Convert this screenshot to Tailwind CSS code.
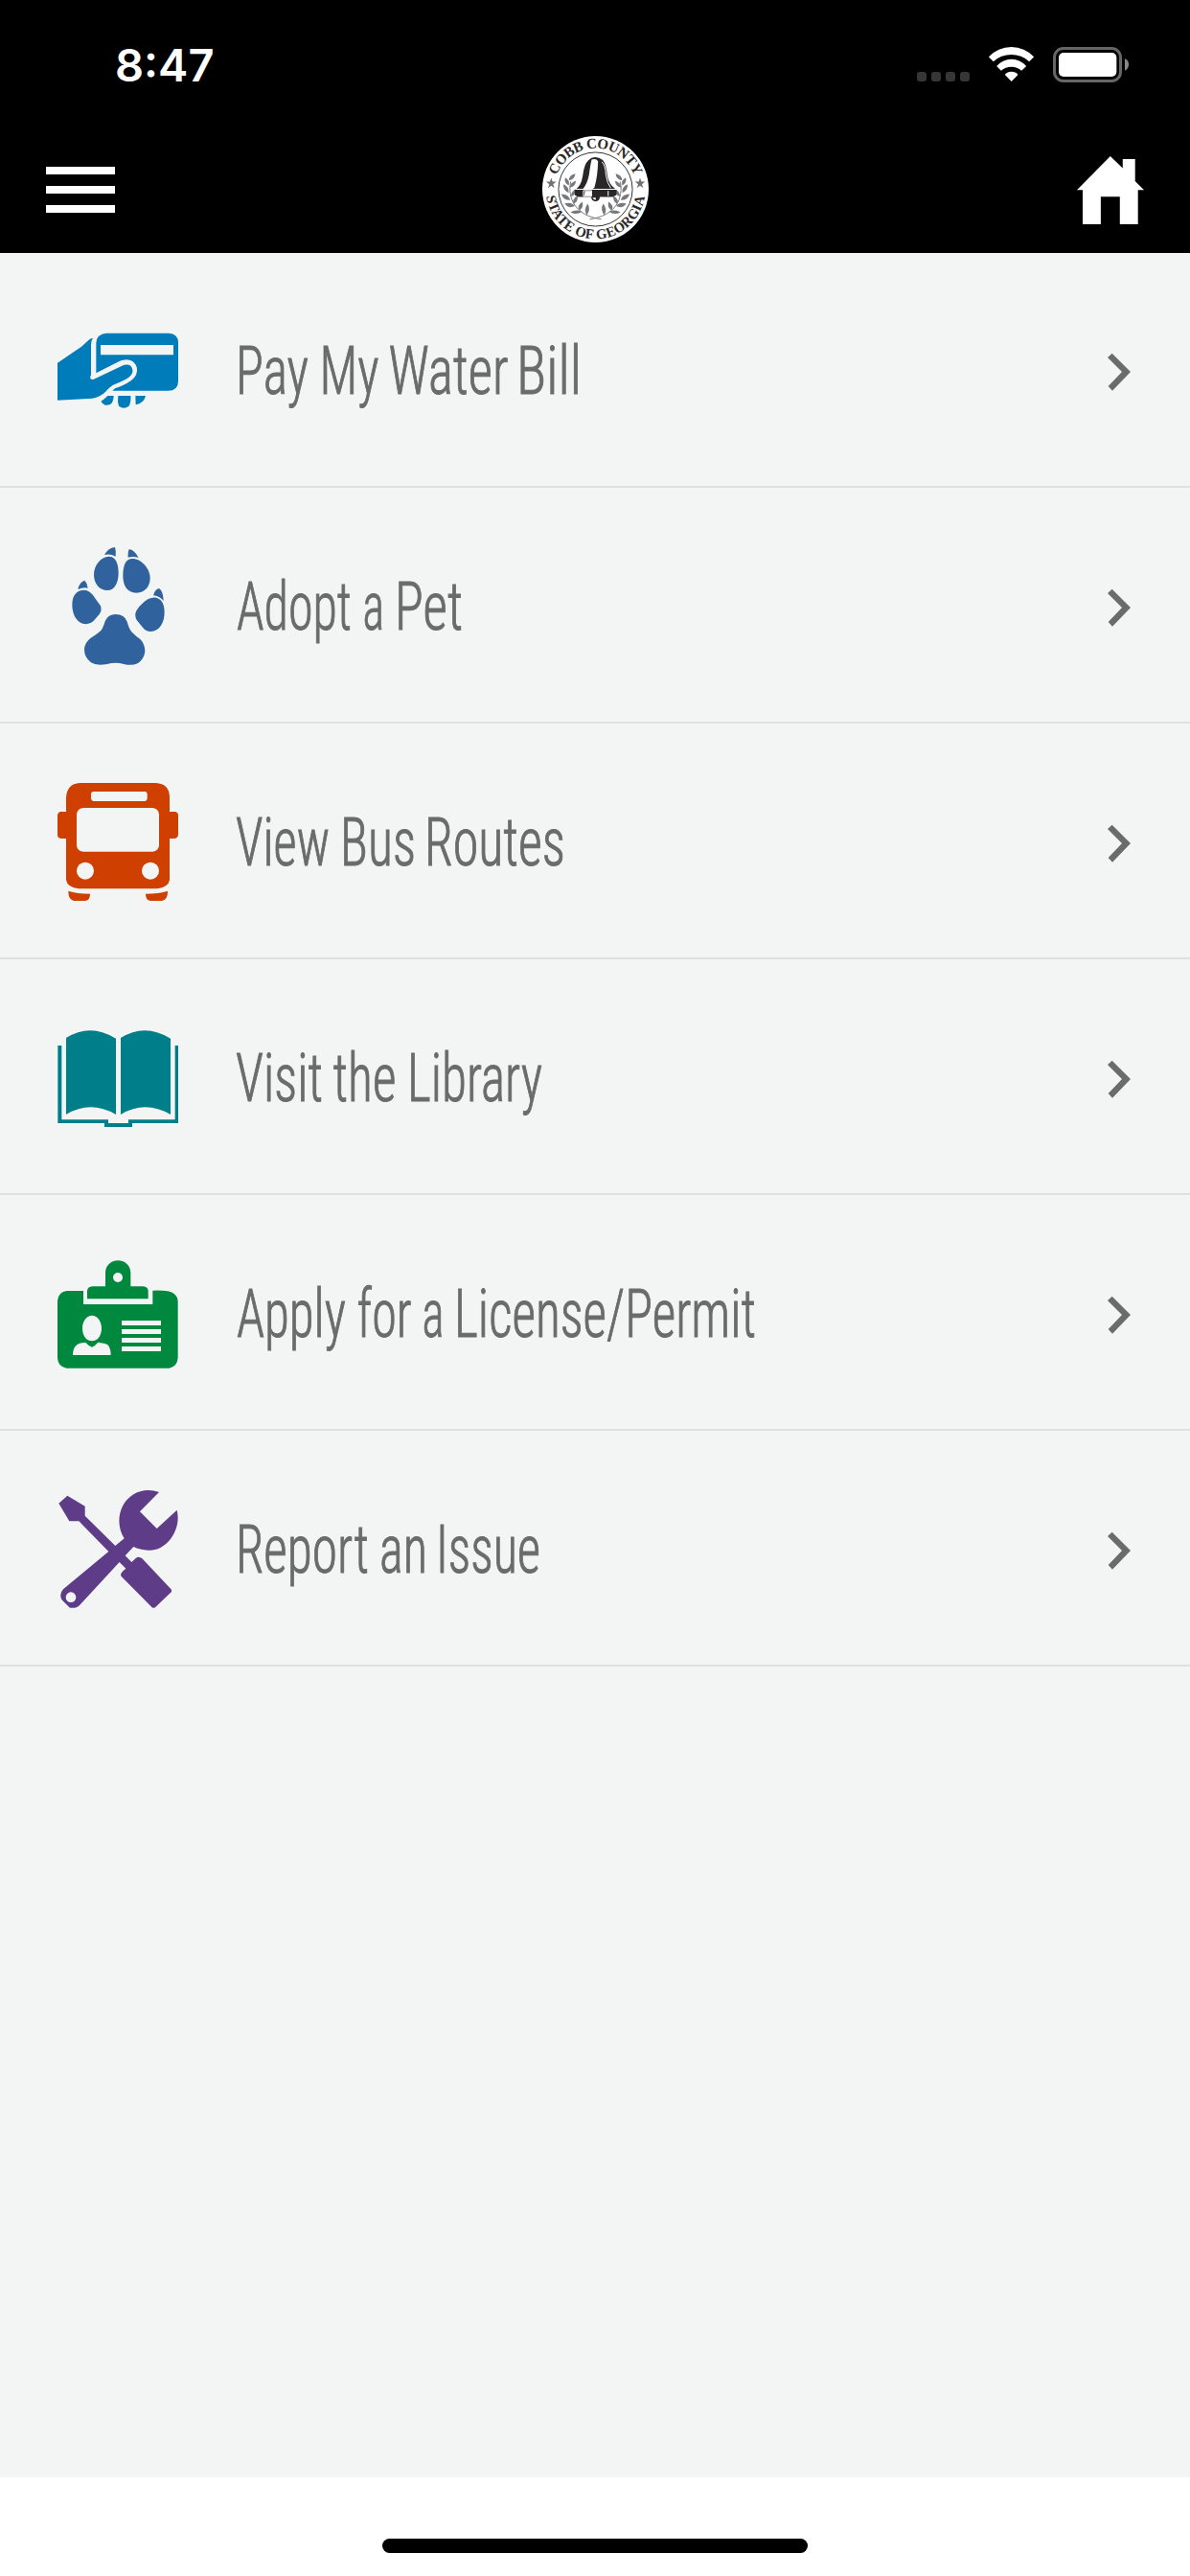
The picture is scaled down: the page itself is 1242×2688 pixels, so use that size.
<!DOCTYPE html>
<html lang="en">
<head>
  <meta charset="UTF-8" />
  <meta name="viewport" content="width=device-width, initial-scale=1.0" />
  <title>Cobb County</title>
  <script src="https://cdn.jsdelivr.net/npm/@tailwindcss/browser@4"></script>
</head>
<body class="flex h-[2688px] w-[1242px] flex-col bg-[#f3f5f4] text-[#6b6b6b]">

  <header class="h-[264px] bg-black text-white">
    <!-- Status bar -->
    <div class="flex h-[132px] items-start justify-between pl-[120px] pr-[64px] pt-[49px]">
      <span class="mt-[-5px] font-['Inter',sans-serif] text-[47px] font-semibold leading-[48px]">8:47</span>
      <div class="flex gap-[20px]">
        <svg class="h-[37px] w-[55px]" viewBox="0 0 55 37" fill="#363636">
          <rect x="0" y="26" width="10" height="10" rx="3" />
          <rect x="15" y="26" width="10" height="10" rx="3" />
          <rect x="30" y="26" width="10" height="10" rx="3" />
          <rect x="45" y="26" width="10" height="10" rx="3" />
        </svg>
        <svg class="h-[37px] w-[47px]" viewBox="305.5 87 141 111" fill="#fff">
          <path d="M305 118A97 97 0 0 1 447 118L432 133A82 82 0 0 0 320 133Z" />
          <path d="M330 147A61 61 0 0 1 423 147L408 161A49 49 0 0 0 344 161Z" />
          <path d="M356 174A26 26 0 0 1 397 174L376.500 195Z" />
        </svg>
        <svg class="h-[37px] w-[79px]" viewBox="507 87 237 111">
          <rect x="511.500" y="91.500" width="207" height="102" rx="28" fill="none" stroke="#666" stroke-width="9" />
          <rect x="525" y="105" width="181" height="75" rx="15" fill="#fff" />
          <path d="M732 123Q744 129 744 142T732 161Z" fill="#888" />
        </svg>
      </div>
    </div>

    <!-- Nav bar -->
    <nav class="grid h-[132px] grid-cols-3 items-start px-[48px]">
      <button class="mt-[42px] flex w-[72px] flex-col gap-[12px]">
        <span class="h-2 w-full bg-white"></span>
        <span class="h-2 w-full bg-white"></span>
        <span class="h-2 w-full bg-white"></span>
      </button>

      <svg class="mt-[10px] h-[111px] w-[111px] justify-self-center" viewBox="47 35 334 334">
        <defs>
          <path id="sealTop" d="M85 202A129 129 0 0 1 343 202" />
          <path id="sealBottom" d="M58 202A156 156 0 0 0 370 202" />
        </defs>
        <circle cx="214" cy="202" r="167" fill="#fff" />
        <circle cx="214" cy="202" r="116" fill="none" stroke="#333" stroke-width="3" />
        <g fill="#2b2829" font-family="'Liberation Serif', serif" font-weight="700" text-anchor="middle">
          <text font-size="45" letter-spacing="-1.500"><textPath href="#sealTop" startOffset="50%">COBB COUNTY</textPath></text>
          <text font-size="44" letter-spacing="0.800"><textPath href="#sealBottom" startOffset="50%">STATE OF GEORGIA</textPath></text>
        </g>
        <g fill="#6f7072">
          <path d="M75 166L79 178L91 178L81 186L85 198L75 191L65 198L69 186L59 178L71 178Z" />
          <path d="M354 166L358 178L370 178L360 186L364 198L354 191L344 198L348 186L338 178L350 178Z" />
        </g>
        <!-- laurel branches -->
        <g id="branch" fill="#77787b">
          <path d="M136 178C126 230 150 285 232 296" fill="none" stroke="#77787b" stroke-width="3" />
          <path d="M151 153Q130 157 131 174Q148 172 151 153Z" />
          <path d="M119 165Q114 182 130 190Q135 174 119 165Z" />
          <path d="M153 176Q134 180 133 197Q150 195 153 176Z" />
          <path d="M113 186Q112 206 130 213Q132 194 113 186Z" />
          <path d="M156 200Q137 207 137 225Q153 220 156 200Z" />
          <path d="M107 217Q112 237 135 236Q129 217 107 217Z" />
          <path d="M158 222Q140 232 144 248Q160 242 158 222Z" />
          <path d="M117 247Q129 264 149 255Q138 241 117 247Z" />
          <path d="M173 241Q155 252 163 268Q178 260 173 241Z" />
          <path d="M135 274Q155 285 172 272Q154 263 135 274Z" />
          <path d="M190 247Q175 264 186 283Q200 267 190 247Z" />
        </g>
        <use href="#branch" transform="translate(428 0) scale(-1 1)" />
        <!-- bell -->
        <path d="M191 112Q211 92 237 110Q248 124 251 158Q255 184 275 200L280 204V220L268 226H228Q226 240 214 240Q203 240 200 226H160L149 220V204Q169 193 174 160Q178 124 191 112Z" fill="#292627" />
        <path d="M202 109Q216 104 222 114Q221 160 211 196L204 202H173Q188 187 194 155Q198 125 202 109Z" fill="#fff" />
        <path d="M234 116Q245 125 247 158Q251 184 262 198" fill="none" stroke="#fff" stroke-width="3" />
        <path d="M151 202H279M176 206V224H202V206ZM254 207V223" fill="none" stroke="#fff" stroke-width="3" />
        <path d="M181 207H201V223H179Z" fill="#fff" />
        <path d="M205 228Q208 236 215 235V228Z" fill="#fff" />
      </svg>

      <svg class="mt-[31px] h-[71px] w-[70px] justify-self-end" viewBox="579 428.500 211 213" fill="#fff">
        <path d="M684 428L723 466V437H762V506L790 534H771V642H714V555H654V642H597V534H579Z" />
      </svg>
    </nav>
  </header>

  <main class="flex-1">
    <ul class="font-['Roboto',sans-serif] text-[71px] font-light [font-stretch:75%] [word-spacing:-10px]">
      <li class="h-[246px] pb-px">
        <a class="flex h-[245px] items-start border-b-2 border-[#dfe1e1] pl-[60px] pr-[62px]" href="#">
          <svg class="mt-[60px] h-[126px] w-[126px]" viewBox="60 12 378 378" fill="#007cba">
            <path d="M60 176L135 125L158 104Q164 98 171 99Q165 106 165 125V214Q160 222 165 227L172 228L262 185Q279 178 290 186Q300 200 291 214Q281 228 234 245Q222 252 210 267Q194 283 170 287L60 293Z" />
            <path fill-rule="evenodd" d="M212 83H408Q438 84 438 113V233Q438 263 406 263H232L240 256Q287 239 301 221Q315 203 306 184Q294 161 265 167Q259 168 252 172L181 208V113Q183 86 212 83ZM195 120V151H423V120Z" />
            <path d="M196 296Q203 293 217 279H236Q235 300 225 306Q207 314 196 296ZM250 279H289Q291 300 283 312Q267 323 252 311Q247 298 250 279ZM304 279H336Q330 303 305 307Z" />
          </svg>
          <svg class="ml-[54px] h-[243px] w-[640px] overflow-visible fill-[#6b6b6b] stroke-[#6b6b6b] stroke-1" viewBox="0 0 640 243">
            <text y="146.500"><tspan x="6" textLength="76" lengthAdjust="spacingAndGlyphs">Pay</tspan> <tspan x="93.500" textLength="62" lengthAdjust="spacingAndGlyphs">My</tspan> <tspan x="165.500" textLength="125" lengthAdjust="spacingAndGlyphs">Water</tspan> <tspan x="299" textLength="68" lengthAdjust="spacingAndGlyphs">Bill</tspan></text>
          </svg>
          <svg class="ml-auto mt-[104px] h-[40px] w-[24px]" viewBox="108 55 72 120" fill="#6b6b6b"><path d="M108 70L122 57L180 115L123 174L110 160L153 115Z" /></svg>
        </a>
      </li>

      <li class="h-[246px] pb-px">
        <a class="flex h-[245px] items-start border-b-2 border-[#dfe1e1] pl-[60px] pr-[62px]" href="#">
          <svg class="mt-[60px] h-[126px] w-[126px]" viewBox="30 60 378 378" fill="#30639e">
            <path d="M177 87Q189 65 210 63Q214 74 212 92Q196 83 177 87ZM251 95Q250 78 254 70Q269 69 284 96Q268 91 251 95ZM94 195Q98 173 115 167Q124 176 125 191Q110 188 94 195ZM330 214Q335 195 348 192Q361 199 362 231Q350 216 330 214Z" />
            <path d="M190 92C211 91 221 113 221 143C221 174 209 198 186 198C162 198 144 177 144 149C144 120 166 93 190 92Z" />
            <path d="M262 99C292 97 320 130 320 160C320 186 303 206 277 206C249 206 235 184 235 153C235 120 243 101 262 99Z" />
            <path d="M106 198Q126 195 141 213Q155 233 165 247Q170 260 161 273L142 295Q130 307 109 302C90 297 76 273 76 244C76 217 87 201 106 198Z" />
            <path d="M329 221C353 219 365 239 365 266C365 300 349 326 322 327Q307 327 297 314L278 291Q270 277 277 262Q285 248 298 237Q312 222 329 221Z" />
            <path d="M212 273Q240 273 248 296Q255 321 264 330Q275 341 290 352Q304 368 304 389Q301 413 281 427Q262 435 238 429Q212 421 185 429Q151 435 135 424Q114 408 114 384Q114 362 134 347Q160 331 169 320Q176 307 179 295Q188 273 212 273Z" />
          </svg>
          <svg class="ml-[54px] h-[243px] w-[640px] overflow-visible fill-[#6b6b6b] stroke-[#6b6b6b] stroke-1" viewBox="0 0 640 243">
            <text y="146.500"><tspan x="7" textLength="120" lengthAdjust="spacingAndGlyphs">Adopt</tspan> <tspan x="138.500" textLength="22.500" lengthAdjust="spacingAndGlyphs">a</tspan> <tspan x="172" textLength="71" lengthAdjust="spacingAndGlyphs">Pet</tspan></text>
          </svg>
          <svg class="ml-auto mt-[104px] h-[40px] w-[24px]" viewBox="108 55 72 120" fill="#6b6b6b"><path d="M108 70L122 57L180 115L123 174L110 160L153 115Z" /></svg>
        </a>
      </li>

      <li class="h-[246px] pb-px">
        <a class="flex h-[245px] items-start border-b-2 border-[#dfe1e1] pl-[60px] pr-[62px]" href="#">
          <svg class="mt-[60px] h-[126px] w-[126px]" viewBox="60 48 378 378" fill="#cf3f00">
            <path fill-rule="evenodd" d="M130 51H368Q411 53 411 97V141H427Q438 142 438 153V213Q437 224 427 225H411V355Q407 378 372 382H126Q91 378 87 355V225H71Q60 223 60 213V153Q61 142 71 141H87V97Q89 54 130 51ZM172 78Q165 79 165 85V100Q166 107 172 108H334Q341 107 341 100V85Q340 78 334 78ZM140 129Q122 131 120 149V247Q122 264 140 266H358Q376 264 378 247V149Q376 131 358 129ZM147 299A27 27 0 1 0 147 353A27 27 0 1 0 147 299ZM351 299A27 27 0 1 0 351 353A27 27 0 1 0 351 299Z" />
            <path d="M94 389Q120 398 162 398Q163 416 147 420H112Q93 415 94 389ZM405 389Q380 398 336 398Q335 416 351 420H387Q406 415 405 389Z" />
          </svg>
          <svg class="ml-[54px] h-[243px] w-[640px] overflow-visible fill-[#6b6b6b] stroke-[#6b6b6b] stroke-1" viewBox="0 0 640 243">
            <text y="146.500"><tspan x="6" textLength="98" lengthAdjust="spacingAndGlyphs">View</tspan> <tspan x="115" textLength="79" lengthAdjust="spacingAndGlyphs">Bus</tspan> <tspan x="203" textLength="147" lengthAdjust="spacingAndGlyphs">Routes</tspan></text>
          </svg>
          <svg class="ml-auto mt-[104px] h-[40px] w-[24px]" viewBox="108 55 72 120" fill="#6b6b6b"><path d="M108 70L122 57L180 115L123 174L110 160L153 115Z" /></svg>
        </a>
      </li>

      <li class="h-[246px] pb-px">
        <a class="flex h-[245px] items-start border-b-2 border-[#dfe1e1] pl-[60px] pr-[62px]" href="#">
          <svg class="mt-[60px] h-[126px] w-[126px]" viewBox="60 36 378 378" fill="#007f8b">
            <path d="M87 99Q163 51 243 101V339Q163 293 87 339ZM258 99Q334 51 414 101V339Q334 293 258 339Z" />
            <path d="M61 123H73V355H219V366H282V355H428V123H438V366H294V378H207V366H61Z" />
          </svg>
          <svg class="ml-[54px] h-[243px] w-[640px] overflow-visible fill-[#6b6b6b] stroke-[#6b6b6b] stroke-1" viewBox="0 0 640 243">
            <text y="146.500"><tspan x="6" textLength="91" lengthAdjust="spacingAndGlyphs">Visit</tspan> <tspan x="107.500" textLength="66" lengthAdjust="spacingAndGlyphs">the</tspan> <tspan x="185" textLength="141" lengthAdjust="spacingAndGlyphs">Library</tspan></text>
          </svg>
          <svg class="ml-auto mt-[104px] h-[40px] w-[24px]" viewBox="108 55 72 120" fill="#6b6b6b"><path d="M108 70L122 57L180 115L123 174L110 160L153 115Z" /></svg>
        </a>
      </li>

      <li class="h-[246px] pb-px">
        <a class="flex h-[245px] items-start border-b-2 border-[#dfe1e1] pl-[60px] pr-[62px]" href="#">
          <svg class="mt-[60px] h-[126px] w-[126px]" viewBox="60 24 378 378" fill="#00883f">
            <path fill-rule="evenodd" d="M153 166V141Q154 128 170 127H210V83C212 33 287 33 289 83V127H328Q344 129 344 141V166ZM249 84A15 15 0 1 0 249 114A15 15 0 1 0 249 84Z" />
            <path fill-rule="evenodd" d="M89 141H141V183H358V140Q409 138 424 149Q437 158 437 176V350Q435 378 410 383H88Q62 379 60 352V172Q63 144 89 141ZM168 218C149 218 138 238 138 258C138 281 150 298 168 298C186 298 198 281 198 258C198 238 187 218 168 218ZM108 342H227Q227 308 208 306L187 302Q177 314 168 317Q158 314 148 303Q108 302 108 342ZM261 234V249H384V234ZM261 261V276H384V261ZM261 288V303H384V288ZM261 315V330H384V315Z" />
          </svg>
          <svg class="ml-[54px] h-[243px] w-[640px] overflow-visible fill-[#6b6b6b] stroke-[#6b6b6b] stroke-1" viewBox="0 0 640 243">
            <text y="146.500"><tspan x="7" textLength="114" lengthAdjust="spacingAndGlyphs">Apply</tspan> <tspan x="132.500" textLength="57" lengthAdjust="spacingAndGlyphs">for</tspan> <tspan x="200.500" textLength="23" lengthAdjust="spacingAndGlyphs">a</tspan> <tspan x="234" textLength="315" lengthAdjust="spacingAndGlyphs">License/Permit</tspan></text>
          </svg>
          <svg class="ml-auto mt-[104px] h-[40px] w-[24px]" viewBox="108 55 72 120" fill="#6b6b6b"><path d="M108 70L122 57L180 115L123 174L110 160L153 115Z" /></svg>
        </a>
      </li>

      <li class="h-[246px] pb-px">
        <a class="flex h-[245px] items-start border-b-2 border-[#dfe1e1] pl-[60px] pr-[62px]" href="#">
          <svg class="mt-[60px] h-[126px] w-[126px]" viewBox="60 42 378 378" fill="#5f3c87">
            <path d="M64 86L91 62L146 95V125L241 219L269 196C240 150 252 87 296 59Q334 36 378 51L318 112L371 165L434 107C449 167 404 235 345 233Q318 232 298 222L272 250L292 270L306 257Q315 251 325 259L417 356V363L366 412Q361 415 356 412L260 315Q255 308 264 299L274 290L254 270L130 404Q118 416 99 413L76 391Q62 373 78 355L220 237L127 142H97Z" />
            <circle cx="102" cy="380" r="16" fill="#f3f5f4" />
          </svg>
          <svg class="ml-[54px] h-[243px] w-[640px] overflow-visible fill-[#6b6b6b] stroke-[#6b6b6b] stroke-1" viewBox="0 0 640 243">
            <text y="146.500"><tspan x="6" textLength="139" lengthAdjust="spacingAndGlyphs">Report</tspan> <tspan x="156" textLength="50" lengthAdjust="spacingAndGlyphs">an</tspan> <tspan x="215" textLength="109" lengthAdjust="spacingAndGlyphs">Issue</tspan></text>
          </svg>
          <svg class="ml-auto mt-[104px] h-[40px] w-[24px]" viewBox="108 55 72 120" fill="#6b6b6b"><path d="M108 70L122 57L180 115L123 174L110 160L153 115Z" /></svg>
        </a>
      </li>
    </ul>
  </main>

  <!-- Home indicator -->
  <footer class="flex h-[103px] justify-center bg-white pt-[64px]">
    <div class="h-[15px] w-[444px] rounded-full bg-black"></div>
  </footer>
</body>
</html>
